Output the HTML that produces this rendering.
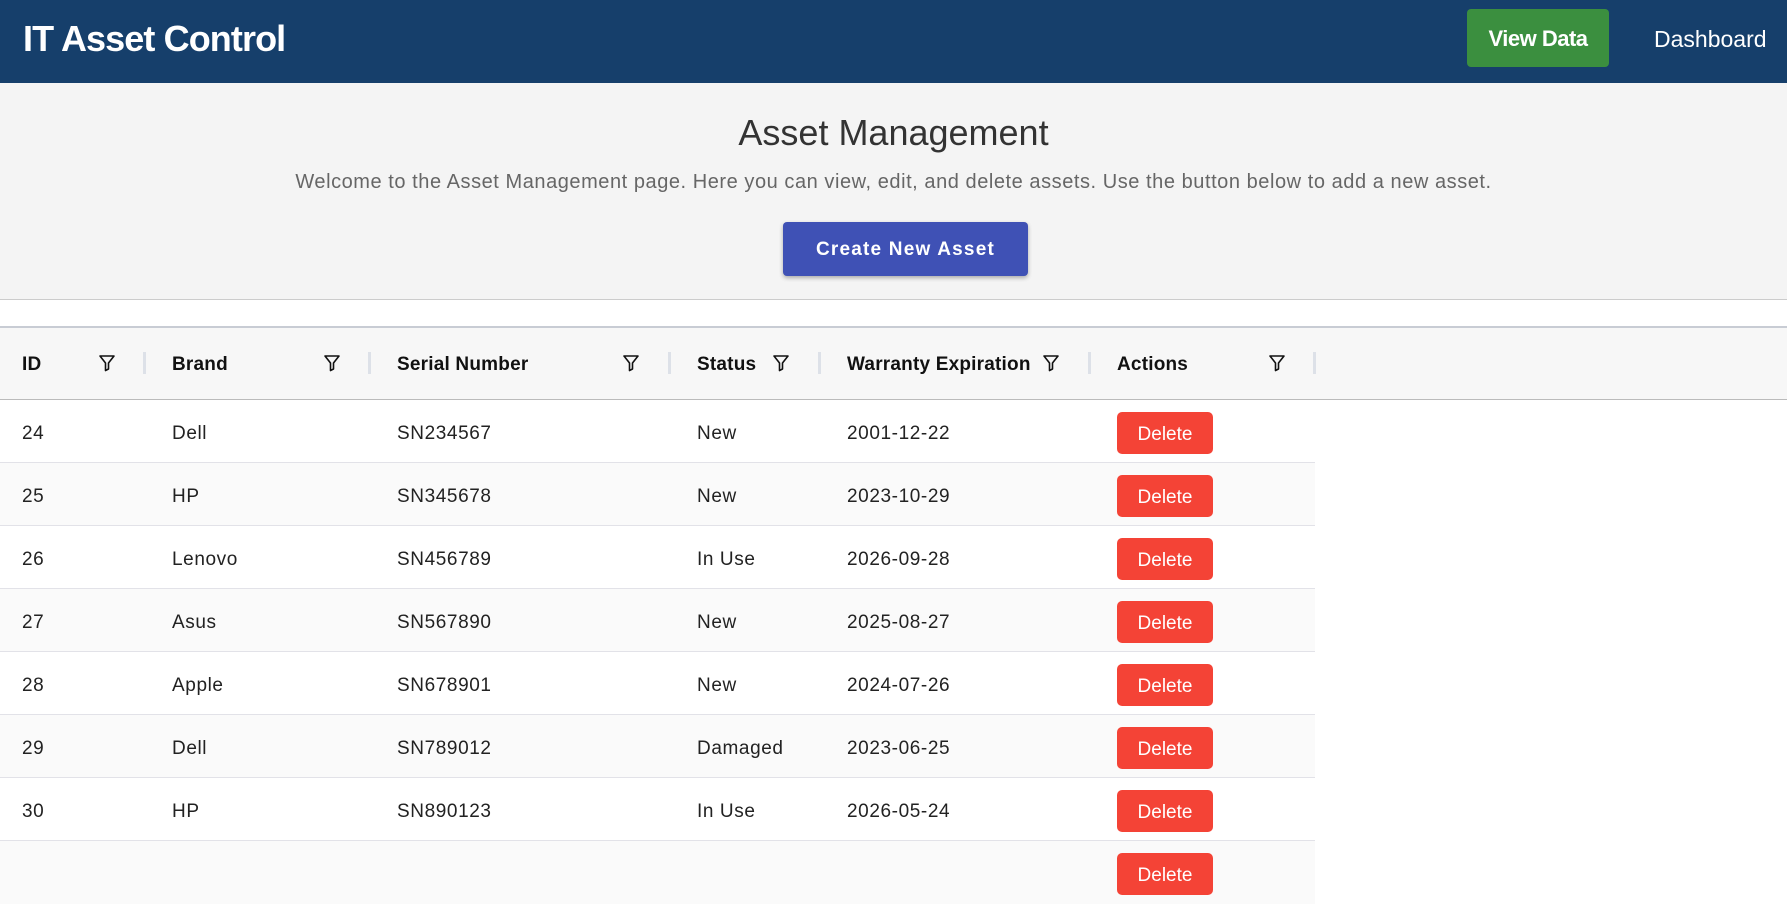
<!DOCTYPE html>
<html><head><meta charset="utf-8"><style>
*{margin:0;padding:0;box-sizing:border-box}
body{width:1787px;height:862px;overflow:hidden;background:#fff;font-family:"Liberation Sans",Arial,sans-serif;position:relative}
.nav{position:absolute;left:0;top:0;width:1787px;height:83px;background:#163f6b}
.logo{position:absolute;left:23px;top:18px;color:#fff;font-weight:bold;font-size:36px;letter-spacing:-0.9px}
.vd{position:absolute;left:1467px;top:9px;width:142px;height:58px;background:#3b8f3f;border-radius:4px;color:#fff;font-weight:bold;font-size:22px;text-align:center;line-height:60px;letter-spacing:-0.5px}
.db{position:absolute;left:1654px;top:26px;color:#fff;font-size:23px}
.hero{position:absolute;left:0;top:83px;width:1787px;height:217px;background:#f4f4f4;border-bottom:1px solid #ccc;text-align:center}
.hero h1{position:absolute;top:29px;width:100%;font-weight:normal;font-size:36px;color:#333}
.hero p{position:absolute;top:88px;width:100%;font-size:20px;letter-spacing:0.55px;color:#666}
.btn{position:absolute;left:783px;top:139px;width:245px;height:54px;background:#3f51b5;border-radius:4px;color:#fff;font-weight:bold;font-size:19px;line-height:56px;letter-spacing:1.2px;box-shadow:0 2px 4px rgba(0,0,0,.3)}
.th{position:absolute;left:0;top:326px;width:1787px;height:74px;background:#f7f7f7;border-top:2px solid #c8ccd4;border-bottom:1px solid #bbb}
.h{position:absolute;top:26px;font-weight:bold;font-size:19px;letter-spacing:0.2px;color:#111}
.sep{position:absolute;top:24px;width:3px;height:22px;background:#dde1e8}
.fi{position:absolute;top:26px}
.row{position:absolute;left:0;width:1315px;height:63px;border-bottom:1px solid #e2e2e8}
.row span{position:absolute;top:23px;font-size:19px;letter-spacing:0.6px;color:#222}
.del{position:absolute;left:1117px;top:12px;width:96px;height:42px;background:#f44336;border-radius:5px;color:#fff;font-size:19px;text-align:center;line-height:46px}
</style></head><body>
<div class="nav"><div class="logo">IT Asset Control</div><div class="vd">View Data</div><div class="db">Dashboard</div></div>
<div class="hero"><h1>Asset Management</h1><p>Welcome to the Asset Management page. Here you can view, edit, and delete assets. Use the button below to add a new asset.</p><div class="btn">Create New Asset</div></div>
<div class="th">
<div class="h" style="left:22px">ID</div>
<div class="h" style="left:172px">Brand</div>
<div class="h" style="left:397px">Serial Number</div>
<div class="h" style="left:697px">Status</div>
<div class="h" style="left:847px">Warranty Expiration</div>
<div class="h" style="left:1117px">Actions</div>
<div class="sep" style="left:143px"></div><div class="sep" style="left:368px"></div><div class="sep" style="left:668px"></div><div class="sep" style="left:818px"></div><div class="sep" style="left:1088px"></div><div class="sep" style="left:1313px"></div>
<svg class="fi" style="left:98px" width="18" height="18" viewBox="0 0 18 18"><path d="M2 2h14l-5.5 7v6l-3 1.5V9z" fill="none" stroke="#111" stroke-width="1.6" stroke-linejoin="round"/></svg>
<svg class="fi" style="left:323px" width="18" height="18" viewBox="0 0 18 18"><path d="M2 2h14l-5.5 7v6l-3 1.5V9z" fill="none" stroke="#111" stroke-width="1.6" stroke-linejoin="round"/></svg>
<svg class="fi" style="left:622px" width="18" height="18" viewBox="0 0 18 18"><path d="M2 2h14l-5.5 7v6l-3 1.5V9z" fill="none" stroke="#111" stroke-width="1.6" stroke-linejoin="round"/></svg>
<svg class="fi" style="left:772px" width="18" height="18" viewBox="0 0 18 18"><path d="M2 2h14l-5.5 7v6l-3 1.5V9z" fill="none" stroke="#111" stroke-width="1.6" stroke-linejoin="round"/></svg>
<svg class="fi" style="left:1042px" width="18" height="18" viewBox="0 0 18 18"><path d="M2 2h14l-5.5 7v6l-3 1.5V9z" fill="none" stroke="#111" stroke-width="1.6" stroke-linejoin="round"/></svg>
<svg class="fi" style="left:1268px" width="18" height="18" viewBox="0 0 18 18"><path d="M2 2h14l-5.5 7v6l-3 1.5V9z" fill="none" stroke="#111" stroke-width="1.6" stroke-linejoin="round"/></svg>
</div>
<div class="row" style="top:400px;background:#fff"><span style="left:22px">24</span><span style="left:172px">Dell</span><span style="left:397px">SN234567</span><span style="left:697px">New</span><span style="left:847px">2001-12-22</span><div class="del">Delete</div></div>
<div class="row" style="top:463px;background:#fafafa"><span style="left:22px">25</span><span style="left:172px">HP</span><span style="left:397px">SN345678</span><span style="left:697px">New</span><span style="left:847px">2023-10-29</span><div class="del">Delete</div></div>
<div class="row" style="top:526px;background:#fff"><span style="left:22px">26</span><span style="left:172px">Lenovo</span><span style="left:397px">SN456789</span><span style="left:697px">In Use</span><span style="left:847px">2026-09-28</span><div class="del">Delete</div></div>
<div class="row" style="top:589px;background:#fafafa"><span style="left:22px">27</span><span style="left:172px">Asus</span><span style="left:397px">SN567890</span><span style="left:697px">New</span><span style="left:847px">2025-08-27</span><div class="del">Delete</div></div>
<div class="row" style="top:652px;background:#fff"><span style="left:22px">28</span><span style="left:172px">Apple</span><span style="left:397px">SN678901</span><span style="left:697px">New</span><span style="left:847px">2024-07-26</span><div class="del">Delete</div></div>
<div class="row" style="top:715px;background:#fafafa"><span style="left:22px">29</span><span style="left:172px">Dell</span><span style="left:397px">SN789012</span><span style="left:697px">Damaged</span><span style="left:847px">2023-06-25</span><div class="del">Delete</div></div>
<div class="row" style="top:778px;background:#fff"><span style="left:22px">30</span><span style="left:172px">HP</span><span style="left:397px">SN890123</span><span style="left:697px">In Use</span><span style="left:847px">2026-05-24</span><div class="del">Delete</div></div>
<div class="row" style="top:841px;background:#fafafa;border:none"><div class="del">Delete</div></div>
</body></html>
